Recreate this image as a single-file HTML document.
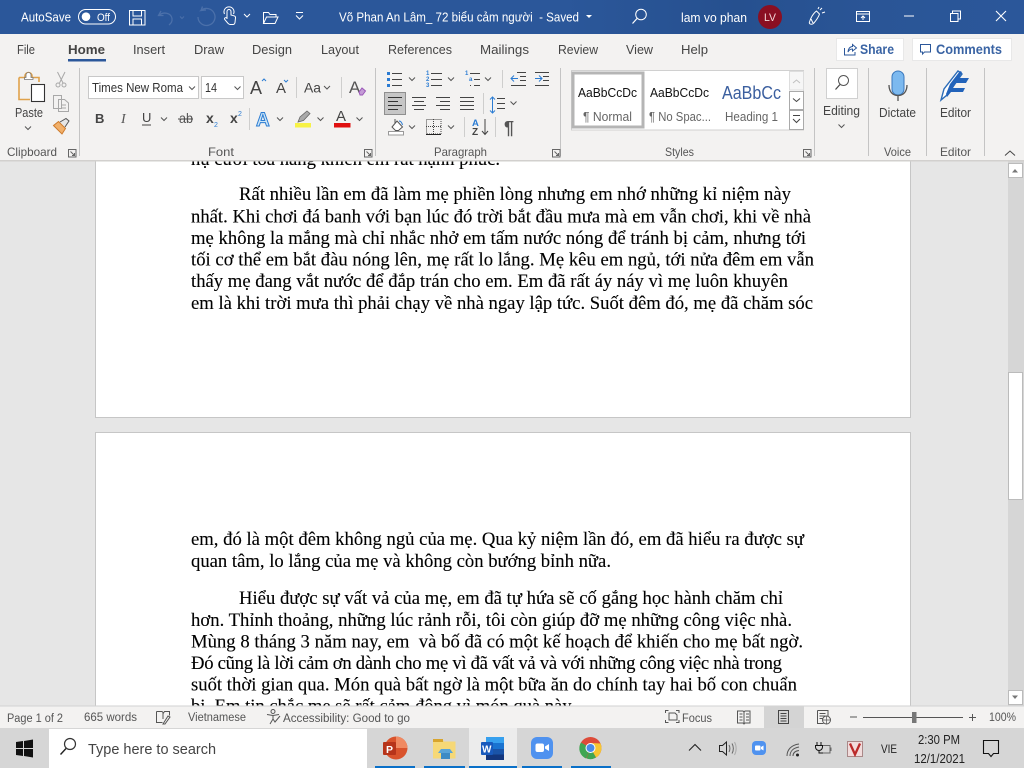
<!DOCTYPE html>
<html lang="vi"><head><meta charset="utf-8"><title>Word</title>
<style>
html,body{margin:0;padding:0;width:1024px;height:768px;overflow:hidden;background:#e6e6e6}
svg{display:block;position:absolute;left:0;top:0}
text{font-family:"Liberation Sans","DejaVu Sans",sans-serif;white-space:pre}
.d{font-family:"Liberation Serif","Noto Serif CJK SC",serif;font-size:18.67px;fill:#000;stroke:#000;stroke-width:.12}
.u{font-size:12.5px;fill:#444}
.n{font-size:13px;fill:#444}
.l{font-size:12px;fill:#555}
.s{font-size:11.5px;fill:#555}
.tb{font-size:13px;fill:#fff}
.k{fill:none;stroke:#444;stroke-width:1}
.sep{stroke:#c4c4c4;stroke-width:1}
</style></head><body>
<svg width="1024" height="768" viewBox="0 0 1024 768" xmlns="http://www.w3.org/2000/svg">
<defs>
<path id="c" d="M-3 -1.500L0 1.500L3 -1.500" fill="none" stroke="#555" stroke-width="1"/>
<path id="lau" d="M0 0H7.500V7.500H0Z M2 2L6 6 M6 3.500V6H3.500" fill="none" stroke="#666" stroke-width="1"/>
<linearGradient id="tg" x1="0" x2="1" y1="0" y2="0"><stop offset="0" stop-color="#2b579a"/><stop offset=".55" stop-color="#2b579a"/><stop offset=".72" stop-color="#26508f"/><stop offset=".85" stop-color="#2a5596"/><stop offset="1" stop-color="#2b579a"/></linearGradient>
</defs>

<!-- document background -->
<rect width="1024" height="768" fill="#e6e6e6"/>
<rect x="95.500" y="150" width="815" height="267.500" fill="#fff" stroke="#c6c6c6"/>
<rect x="95.500" y="432.500" width="815" height="290" fill="#fff" stroke="#c6c6c6"/>

<!-- document text -->
<text class="d" x="191" y="165" textLength="309">nụ cười tỏa nắng khiến em rất hạnh phúc.</text>
<text class="d" x="239" y="200" textLength="552">Rất nhiều lần em đã làm mẹ phiền lòng nhưng em nhớ những kỉ niệm này</text>
<text class="d" x="191" y="222.500" textLength="620">nhất. Khi chơi đá banh với bạn lúc đó trời bắt đầu mưa mà em vẫn chơi, khi về nhà</text>
<text class="d" x="191" y="244" textLength="615">mẹ không la mắng mà chỉ nhắc nhở em tấm nước nóng để tránh bị cảm, nhưng tới</text>
<text class="d" x="191" y="265.500" textLength="623">tối cơ thể em bắt đàu nóng lên, mẹ rất lo lắng. Mẹ kêu em ngủ, tới nửa đêm em vẫn</text>
<text class="d" x="191" y="287" textLength="597">thấy mẹ đang vắt nước để đắp trán cho em. Em đã rất áy náy vì mẹ luôn khuyên</text>
<text class="d" x="191" y="309" textLength="622">em là khi trời mưa thì phải chạy về nhà ngay lập tức. Suốt đêm đó, mẹ đã chăm sóc</text>
<text class="d" x="191" y="545" textLength="613">em, đó là một đêm không ngủ của mẹ. Qua kỷ niệm lần đó, em đã hiểu ra được sự</text>
<text class="d" x="191" y="567" textLength="420">quan tâm, lo lắng của mẹ và không còn bướng bỉnh nữa.</text>
<text class="d" x="239" y="604" textLength="544">Hiểu được sự vất vả của mẹ, em đã tự hứa sẽ cố gắng học hành chăm chỉ</text>
<text class="d" x="191" y="626" textLength="601">hơn. Thỉnh thoảng, những lúc rảnh rỗi, tôi còn giúp đỡ mẹ những công việc nhà.</text>
<text class="d" x="191" y="647.500" textLength="612">Mùng 8 tháng 3 năm nay, em  và bố đã có một kế hoạch để khiến cho mẹ bất ngờ.</text>
<text class="d" x="191" y="669" textLength="591">Đó cũng là lời cảm ơn dành cho mẹ vì đã vất vả và với những công việc nhà trong</text>
<text class="d" x="191" y="690.500" textLength="606">suốt thời gian qua. Món quà bất ngờ là một bữa ăn do chính tay hai bố con chuẩn</text>
<text class="d" x="191" y="712" textLength="384">bị. Em tin chắc mẹ sẽ rất cảm động vì món quà này.</text>

<!-- scrollbar -->
<rect x="1008" y="161" width="16" height="545" fill="#d6d6d6"/>
<rect x="1008.500" y="163.500" width="14" height="14" fill="#fff" stroke="#bbb"/>
<path d="M1012 172.500h6l-3-3.500z" fill="#777"/>
<rect x="1008.500" y="372.500" width="14" height="127" fill="#fff" stroke="#bbb"/>
<rect x="1008.500" y="690.500" width="14" height="14" fill="#fff" stroke="#bbb"/>
<path d="M1012 695.500h6l-3 3.500z" fill="#777"/>

<!-- title bar -->
<rect width="1024" height="34" fill="url(#tg)"/>
<text class="tb" x="21" y="21.500" textLength="50" lengthAdjust="spacingAndGlyphs">AutoSave</text>
<rect x="78.500" y="9.500" width="37" height="14.500" rx="7.200" fill="none" stroke="#fff"/>
<circle cx="86" cy="16.700" r="4.300" fill="#fff"/>
<text x="97" y="21" textLength="13" lengthAdjust="spacingAndGlyphs" style="font-size:11px;fill:#fff">Off</text>
<path d="M129.500 10.500h15.500v14.500h-15.500z M133 10.500v5.500h8.500v-5.500 M133 25v-6h8.500v6" fill="none" stroke="#fff"/>
<path d="M161 11l-2.500 4.500h5 M159 15.500c4-4 12-3 13 3 .4 3-1 5-3 6.500" fill="none" stroke="#4b70aa" stroke-width="1.300"/>
<path d="M180 16.500l2 2 2-2" fill="none" stroke="#4b70aa"/>
<path d="M198 17a8.500 8.500 0 1 0 3-6.500l5-.5 M202.500 6.500l-1.500 4" fill="none" stroke="#4b70aa" stroke-width="1.300"/>
<path d="M227 19v-7.500a2 2 0 0 1 4 0V15l3 .8c1 .3 1.700 1 1.500 2.200l-.5 4.500c-.2 1-.8 2-2 2h-3c-1 0-1.600-.8-2.300-1.500l-3-3.500c-.9-1.300 1-2.500 2.300-1.500zM224.500 14a5 5 0 1 1 9 0" fill="none" stroke="#fff" stroke-width="1"/>
<path d="M244 14l3 3 3-3" fill="none" stroke="#fff"/>
<path d="M263.500 23.500v-11h5l1.500 2h6v2.500 M263.500 23.500l3-6.500h11.500l-3 6.500z" fill="none" stroke="#fff"/>
<path d="M296 12.500h7 M296 15.500l3.500 3.500 3.500-3.500" fill="none" stroke="#fff"/>
<text class="tb" x="339" y="21.500" textLength="240" lengthAdjust="spacingAndGlyphs">Võ Phan An Lâm_ 72 biểu cảm người  - Saved</text>
<path d="M586 15h6l-3 3z" fill="#fff"/>
<circle cx="641" cy="14.500" r="5.300" fill="none" stroke="#fff"/><path d="M637 18.500l-4.500 5" stroke="#fff" stroke-width="1.200"/>
<text class="tb" x="681" y="22" textLength="66" lengthAdjust="spacingAndGlyphs">lam vo phan</text>
<circle cx="770" cy="17" r="12" fill="#8a0f22"/>
<text x="764" y="21" textLength="12" lengthAdjust="spacingAndGlyphs" style="font-size:11px;fill:#f4d8d8">LV</text>
<path d="M809.500 22c1-4 4-9 7-11l3 3c-1 3.500-3 6-6 9.500-2 1.500-5 .5-4-1.500zM813 23l-2-4M820 10l2-2M822 13l3-1M818 9l1-2" fill="none" stroke="#fff"/>
<path d="M856.500 11.500h13v10h-13zM856.500 14h13M863 20v-4M861 18l2-2 2 2" fill="none" stroke="#fff"/>
<path d="M904 16h10" stroke="#fff"/>
<path d="M950.500 13.500h7.500v8h-7.500zM952.500 13v-2h8v8h-2.500" fill="none" stroke="#fff"/>
<path d="M996 11l10 10M1006 11l-10 10" stroke="#fff" stroke-width="1.100"/>

<!-- ribbon -->
<rect y="34" width="1024" height="126" fill="#f3f2f1"/>
<rect y="160" width="1024" height="1.500" fill="#d2d0ce"/>
<text class="n" x="17" y="54" textLength="18" lengthAdjust="spacingAndGlyphs">File</text>
<text class="n" x="68" y="54" textLength="37" lengthAdjust="spacingAndGlyphs" style="font-weight:bold">Home</text>
<text class="n" x="133" y="54" textLength="32" lengthAdjust="spacingAndGlyphs">Insert</text>
<text class="n" x="194" y="54" textLength="30" lengthAdjust="spacingAndGlyphs">Draw</text>
<text class="n" x="252" y="54" textLength="40" lengthAdjust="spacingAndGlyphs">Design</text>
<text class="n" x="321" y="54" textLength="38" lengthAdjust="spacingAndGlyphs">Layout</text>
<text class="n" x="388" y="54" textLength="64" lengthAdjust="spacingAndGlyphs">References</text>
<text class="n" x="480" y="54" textLength="49" lengthAdjust="spacingAndGlyphs">Mailings</text>
<text class="n" x="558" y="54" textLength="40" lengthAdjust="spacingAndGlyphs">Review</text>
<text class="n" x="626" y="54" textLength="27" lengthAdjust="spacingAndGlyphs">View</text>
<text class="n" x="681" y="54" textLength="27" lengthAdjust="spacingAndGlyphs">Help</text>
<rect x="68" y="59" width="38" height="2.500" fill="#2b579a"/>
<rect x="836.500" y="38.500" width="67" height="22" fill="#fff" stroke="#e8e8e8"/>
<path d="M844.500 48v7h10.500v-3M848 52c0-3 2-5.500 4.500-5.500v-2l4 3.500-4 3v-2c-2 0-3.500 1-4.500 3z" fill="none" stroke="#2b579a"/>
<text x="860" y="54" textLength="34" lengthAdjust="spacingAndGlyphs" style="font-size:13.500px;font-weight:bold;fill:#3a64a4">Share</text>
<rect x="912.500" y="38.500" width="99" height="22" fill="#fff" stroke="#e8e8e8"/>
<path d="M920.500 44.500h10v7.500h-6l-2 2v-2h-2z" fill="none" stroke="#2b579a"/>
<text x="936" y="54" textLength="66" lengthAdjust="spacingAndGlyphs" style="font-size:13.500px;font-weight:bold;fill:#3a64a4">Comments</text>

<!-- group separators -->
<path class="sep" d="M79.500 68v88M375.500 68v88M560.500 68v88M814.500 68v88M868.500 68v88M926.500 68v88M984.500 68v88"/>
<path class="sep" stroke-opacity=".8" d="M296.500 77v21M341.500 77v21M249.500 108v22M502.500 70v18M483.500 93v21M464.500 117v20M495.500 117v20"/>

<!-- clipboard -->
<path d="M19 77.500h6v-1.500a3.500 3.500 0 0 1 7 0v1.500h7v4.500M19 77.500V99.500h11" fill="none" stroke="#e0a24b" stroke-width="1.600"/>
<path d="M24.500 79.500h8.500v-2h-2v-2.500a2.500 2.500 0 0 0-5 0v2.500h-1.500z" fill="#fff" stroke="#777" stroke-width=".8"/>
<rect x="31.500" y="84.500" width="13" height="17" fill="#fff" stroke="#333" stroke-width="1.100"/>
<text class="n" x="15" y="117" textLength="28" lengthAdjust="spacingAndGlyphs">Paste</text>
<use href="#c" x="28" y="128"/>
<path d="M57.500 72l5.500 11M65 72l-5.500 11" stroke="#a8a8a8" fill="none"/><circle cx="58" cy="85" r="2" fill="none" stroke="#a8a8a8"/><circle cx="64" cy="85" r="2" fill="none" stroke="#a8a8a8"/>
<path d="M53.500 95.500h8v13h-8zM58.500 99.500h6l4 3.500v8.500h-10zM61 105h5M61 108h5" fill="#f3f2f1" stroke="#a8a8a8"/>
<path d="M53.500 125.500l5-4 7 7-3.500 5.500z" fill="#f1b06a" stroke="#cd7a2b"/><path d="M60 122l6-3.500 3 2.500-4 6" fill="#e6e6e6" stroke="#555"/>
<text class="l" x="7" y="156" textLength="50" lengthAdjust="spacingAndGlyphs">Clipboard</text>
<use href="#lau" x="68.500" y="149.500"/>

<!-- font group -->
<rect x="88.500" y="76.500" width="110" height="22" fill="#fff" stroke="#c8c8c8"/>
<text x="92" y="92" textLength="91" lengthAdjust="spacingAndGlyphs" style="font-size:13px;fill:#333">Times New Roma</text>
<use href="#c" x="192" y="88"/>
<rect x="201.500" y="76.500" width="42" height="22" fill="#fff" stroke="#c8c8c8"/>
<text x="205" y="92" textLength="12" lengthAdjust="spacingAndGlyphs" style="font-size:13px;fill:#333">14</text>
<use href="#c" x="237.500" y="88"/>
<text x="250" y="94" style="font-size:18px;fill:#444">A</text>
<path d="M262 81l2-2 2 2" stroke="#2b7cd3" fill="none"/>
<text x="276" y="93" style="font-size:15px;fill:#444">A</text>
<path d="M284 80l2 2 2-2" stroke="#2b7cd3" fill="none"/>
<text x="304" y="92.500" textLength="17" lengthAdjust="spacingAndGlyphs" style="font-size:14px;fill:#444">Aa</text>
<use href="#c" x="327" y="87.500"/>
<text x="349" y="93" style="font-size:17px;fill:#555">A</text>
<path d="M359 92l3-4 3.500 3-3 4h-2.500z" fill="#c49bd6" stroke="#9a57b8"/>
<text x="95" y="123" style="font-size:13px;font-weight:bold;fill:#444">B</text>
<text x="121" y="123" style="font-size:14px;font-style:italic;fill:#555;font-family:'Liberation Serif',serif">I</text>
<text x="142" y="122" style="font-size:13px;fill:#444">U</text><path d="M142 125h9" stroke="#444"/>
<use href="#c" x="164" y="119"/>
<text x="179" y="123" textLength="14" lengthAdjust="spacingAndGlyphs" style="font-size:14px;fill:#555">ab</text><path d="M178 119h15" stroke="#444"/>
<text x="206" y="123" style="font-size:14px;font-weight:bold;fill:#444">x</text><text x="214" y="127" style="font-size:7px;fill:#2b7cd3">2</text>
<text x="230" y="123" style="font-size:14px;font-weight:bold;fill:#444">x</text><text x="238" y="116" style="font-size:7px;fill:#2b7cd3">2</text>
<text x="256" y="126" style="font-size:19px;font-weight:bold;fill:#cde6f7;stroke:#2b7cd3;stroke-width:1">A</text>
<use href="#c" x="280" y="119"/>
<path d="M298 122l2-5 7-6 3 2.500-6.500 7z" fill="#aaa" stroke="#666" stroke-width=".8"/>
<rect x="295" y="123" width="16" height="4.500" fill="#f7f246"/>
<use href="#c" x="320.500" y="119"/>
<text x="336" y="121" style="font-size:15px;fill:#444">A</text>
<rect x="334" y="123" width="16.500" height="4.500" fill="#e01010"/>
<use href="#c" x="359.500" y="119"/>
<text class="l" x="208" y="156" textLength="26" lengthAdjust="spacingAndGlyphs">Font</text>
<use href="#lau" x="364.500" y="149.500"/>

<!-- paragraph: row 1 -->
<g fill="#2b7cd3">
<rect x="387" y="72" width="3" height="3"/><rect x="387" y="78" width="3" height="3"/><rect x="387" y="84" width="3" height="3"/>
</g>
<path class="k" d="M392 73.500h10M392 79.500h10M392 85.500h10"/>
<use href="#c" x="412" y="79"/>
<text x="426" y="75" style="font-size:6px;fill:#2b7cd3;font-weight:bold">1</text><text x="426" y="81" style="font-size:6px;fill:#2b7cd3;font-weight:bold">2</text><text x="426" y="87" style="font-size:6px;fill:#2b7cd3;font-weight:bold">3</text>
<path class="k" d="M431 73.500h11M431 79.500h11M431 85.500h11"/>
<use href="#c" x="451" y="79"/>
<text x="465" y="75" style="font-size:6px;fill:#2b7cd3;font-weight:bold">1</text><text x="469" y="81" style="font-size:6px;fill:#2b7cd3;font-weight:bold">a</text>
<path class="k" d="M470 73.500h10M474 79.500h6M474 85.500h6M470 85.500h1"/>
<use href="#c" x="488" y="79"/>
<path class="k" d="M517 72.500h9M520 76.500h6M520 80.500h6M511 85.500h15"/><path d="M511 78.500h7M514 75.500l-3 3 3 3" fill="none" stroke="#2b7cd3"/>
<path class="k" d="M535 72.500h14M543 76.500h6M543 80.500h6M535 85.500h14"/><path d="M535 78.500h7M539 75.500l3 3-3 3" fill="none" stroke="#2b7cd3"/>

<!-- paragraph: row 2 -->
<rect x="384.500" y="92.500" width="21" height="22" fill="#c6c6c6" stroke="#8f8f8f"/>
<path d="M388 97.500h14M388 101.500h10M388 105.500h14M388 109.500h10" stroke="#333" fill="none"/>
<path class="k" d="M412 97.500h14M414 101.500h10M412 105.500h14M414 109.500h10"/>
<path class="k" d="M436 97.500h14M440 101.500h10M436 105.500h14M440 109.500h10"/>
<path class="k" d="M460 97.500h14M460 101.500h14M460 105.500h14M460 109.500h14"/>
<path d="M492.500 97v16M490 99.500l2.500-2.500 2.500 2.500M490 110.500l2.500 2.500 2.500-2.500" fill="none" stroke="#2b7cd3"/>
<path class="k" d="M497 98.500h8M497 103.500h8M497 108.500h8"/>
<use href="#c" x="513.500" y="103"/>

<!-- paragraph: row 3 -->
<path d="M392 127l5-6 5.500 6-4 3.500h-3z" fill="#fff" stroke="#555"/><path d="M395 119v4" stroke="#555"/><path d="M399 121c2 0 3 2 3.500 4" stroke="#2b7cd3" fill="none"/>
<rect x="388.500" y="131.500" width="15" height="3.500" fill="#fff" stroke="#999"/>
<use href="#c" x="412" y="127"/>
<path d="M426.500 119.500h14.500v14.500h-14.500z" fill="none" stroke="#444" stroke-dasharray="1 1"/><path d="M426 126.500h15M433.500 119v15" stroke="#444" stroke-dasharray="1 1"/><path d="M426 134.500h15" stroke="#222"/>
<use href="#c" x="451" y="127"/>
<text x="472" y="126" style="font-size:9.500px;font-weight:bold;fill:#2b7cd3">A</text>
<text x="472" y="135" style="font-size:10px;font-weight:bold;fill:#444">Z</text>
<path d="M485 119v15M482 131l3 3.500 3-3.500" fill="none" stroke="#444"/>
<text x="504" y="134" style="font-size:18px;font-weight:bold;fill:#555">¶</text>
<text class="l" x="434" y="156" textLength="53" lengthAdjust="spacingAndGlyphs">Paragraph</text>
<use href="#lau" x="552.500" y="149.500"/>

<!-- styles -->
<rect x="571.500" y="70.500" width="232" height="59.500" fill="#fff" stroke="#d0d0d0"/>
<rect x="573" y="73" width="70" height="54" fill="#fff" stroke="#b5b5b5" stroke-width="3"/>
<text x="578" y="97" textLength="59" lengthAdjust="spacingAndGlyphs" style="font-size:13px;fill:#111">AaBbCcDc</text>
<text x="583" y="121" textLength="49" lengthAdjust="spacingAndGlyphs" style="font-size:12.500px;fill:#666">¶ Normal</text>
<text x="650" y="97" textLength="59" lengthAdjust="spacingAndGlyphs" style="font-size:13px;fill:#111">AaBbCcDc</text>
<text x="649" y="121" textLength="62" lengthAdjust="spacingAndGlyphs" style="font-size:12.500px;fill:#666">¶ No Spac...</text>
<text x="722" y="99" textLength="59" lengthAdjust="spacingAndGlyphs" style="font-size:18px;fill:#3b5f9f">AaBbCc</text>
<text x="725" y="121" textLength="53" lengthAdjust="spacingAndGlyphs" style="font-size:12.500px;fill:#666">Heading 1</text>
<rect x="789.500" y="71.500" width="14" height="18.500" fill="#f6f6f6" stroke="#ddd"/>
<path d="M793 83l3.500-3 3.500 3" stroke="#c0c0c0" fill="none"/>
<rect x="789.500" y="91.500" width="14" height="18" fill="#fff" stroke="#aaa"/>
<path d="M793 98.500l3.500 3 3.500-3" stroke="#444" fill="none"/>
<rect x="789.500" y="110.500" width="14" height="19" fill="#fff" stroke="#aaa"/>
<path d="M793 115.500h7M793 119l3.500 3.500 3.500-3.500" stroke="#444" fill="none"/>
<text class="l" x="665" y="156" textLength="29" lengthAdjust="spacingAndGlyphs">Styles</text>
<use href="#lau" x="803.500" y="149.500"/>

<!-- editing -->
<rect x="826.500" y="68.500" width="31" height="30" fill="#fff" stroke="#d0d0d0"/>
<circle cx="843.500" cy="80.500" r="5" fill="none" stroke="#555"/><path d="M840 84.500l-4.500 5" stroke="#444" stroke-width="1.200"/>
<text class="n" x="823" y="115" textLength="37" lengthAdjust="spacingAndGlyphs">Editing</text>
<use href="#c" x="841.500" y="126"/>
<!-- dictate -->
<rect x="892" y="71" width="12" height="24" rx="6" fill="#7cb9ef" stroke="#3a78bd"/>
<path d="M889 85c0 6.500 3.500 10.500 9 10.500s9-4 9-10.500M898 96v5" fill="none" stroke="#555" stroke-width="1.300"/>
<text class="n" x="879" y="117" textLength="37" lengthAdjust="spacingAndGlyphs">Dictate</text>
<text class="l" x="884" y="156" textLength="27" lengthAdjust="spacingAndGlyphs">Voice</text>
<!-- editor -->
<path d="M941 100l3-11 14-18 4 3-15 21z" fill="#fff" stroke="#2b6cb8" stroke-width="1.400"/>
<path d="M947 97l4-5h12l2-4h-12l3-5h10l3-5h-10l3-6-2-1-10 13-4 10z" fill="#2263ba"/>
<text class="n" x="940" y="117" textLength="31" lengthAdjust="spacingAndGlyphs">Editor</text>
<text class="l" x="940" y="156" textLength="31" lengthAdjust="spacingAndGlyphs">Editor</text>
<path d="M1005 155.500l5-4.500 5 4.500" fill="none" stroke="#444"/>

<!-- status bar -->
<rect y="706" width="1024" height="22" fill="#f3f2f1"/>
<rect y="705.500" width="1024" height="1" fill="#d2d2d2"/>
<text class="s" x="7" y="722" textLength="56" lengthAdjust="spacingAndGlyphs">Page 1 of 2</text>
<text class="s" x="84" y="721" textLength="53" lengthAdjust="spacingAndGlyphs">665 words</text>
<path d="M156.500 711.500h5.500l1.500 1.500 1-1.500h5v4M156.500 711.500v11h6M163 713v6M163 724l5-8 2 1-5 7z" fill="none" stroke="#555"/>
<text class="s" x="188" y="721" textLength="58" lengthAdjust="spacingAndGlyphs">Vietnamese</text>
<circle cx="273" cy="711.500" r="2" fill="none" stroke="#555"/><path d="M267 714.500l6 1 6-1M273 716v3l-3 5M273 719l2 3 5-6" fill="none" stroke="#555"/>
<text class="s" x="283" y="722" textLength="127" lengthAdjust="spacingAndGlyphs">Accessibility: Good to go</text>
<path d="M665.500 713v-2.500h3M676 710.500h3v2.500M665.500 720v2.500h3M676 722.500h3V720M669 713h6l2 2v5h-8z" fill="none" stroke="#555"/>
<text class="s" x="682" y="722" textLength="30" lengthAdjust="spacingAndGlyphs">Focus</text>
<path d="M737.500 711h5.500l1 1 1-1h5v12h-5l-1 1-1-1h-5.500zM744 712v11M739.500 714h3M739.500 717h3M739.500 720h3M746 714h3M746 717h3M746 720h3" fill="none" stroke="#555"/>
<rect x="764" y="706" width="40" height="22" fill="#d4d4d4"/>
<path d="M778.500 710.500h10v13h-10zM780.500 713.500h6M780.500 716h6M780.500 718.500h6M780.500 721h6" fill="none" stroke="#444"/>
<path d="M817.500 710.500h10.500v8M817.500 710.500v13h6M819.500 713.500h6M819.500 716h6M819.500 718.500h3" fill="none" stroke="#555"/>
<circle cx="826.500" cy="720" r="4" fill="#f3f2f1" stroke="#555"/><path d="M822.500 720h8M826.500 716v8" stroke="#555" stroke-width=".7"/>
<path d="M850 717h7M863 717.500h100M969 717.500h7M972.500 714v7" stroke="#555"/>
<rect x="912" y="712" width="4.500" height="11" fill="#777"/>
<text class="s" x="989" y="721" textLength="27" lengthAdjust="spacingAndGlyphs">100%</text>

<!-- taskbar -->
<rect y="728" width="1024" height="40" fill="#d6d6d6"/>
<path d="M16 742l7-1v7h-7zM24 741l9-1.500v8.500h-9zM16 749h7v7l-7-1zM24 749h9v8.500l-9-1.500z" fill="#111"/>
<rect x="49" y="729" width="318" height="39" fill="#fff"/>
<circle cx="70" cy="744" r="5.500" fill="none" stroke="#333" stroke-width="1.200"/><path d="M66 748.500l-5.500 6" stroke="#222" stroke-width="1.400"/>
<text x="88" y="754" textLength="128" lengthAdjust="spacingAndGlyphs" style="font-size:15px;fill:#444">Type here to search</text>
<rect x="469" y="728" width="48" height="40" fill="#ececec"/>
<g fill="#0a70c8">
<rect x="375" y="766" width="40" height="2"/><rect x="424" y="766" width="41" height="2"/><rect x="469" y="766" width="48" height="2"/><rect x="522" y="766" width="40" height="2"/><rect x="571" y="766" width="40" height="2"/>
</g>
<!-- powerpoint -->
<circle cx="396" cy="748" r="11.500" fill="#d9532c"/>
<path d="M396 748v-11.500a11.500 11.500 0 0 1 11.500 11.500z" fill="#f08a62"/>
<rect x="383" y="742" width="13" height="13" rx="1" fill="#b7341a"/>
<text x="386" y="753" style="font-size:10.500px;font-weight:bold;fill:#fff">P</text>
<!-- folder -->
<path d="M433 739h9l2 2.500h11.500v17h-22.500z" fill="#f6d877"/><rect x="433" y="739" width="10" height="3" fill="#d8a52e"/>
<rect x="441" y="753" width="9" height="6" fill="#3e8bc5"/><path d="M438 753l3-4h9l3 4z" fill="#5aa4d8"/>
<!-- word -->
<rect x="486" y="737" width="18" height="23" rx="1" fill="#1f5fb5"/>
<rect x="486" y="737" width="18" height="6" fill="#37a0ee"/><rect x="486" y="743" width="18" height="6" fill="#1a73d0"/><rect x="486" y="749" width="18" height="5.500" fill="#1a54a8"/><rect x="486" y="754.500" width="18" height="5.500" fill="#13377e"/>
<rect x="481" y="742" width="12" height="13" rx="1" fill="#185abd"/>
<text x="482" y="752.500" style="font-size:10px;font-weight:bold;fill:#fff">W</text>
<!-- zoom -->
<rect x="531" y="737" width="22" height="22" rx="6" fill="#4f92ef"/>
<rect x="535.500" y="743.500" width="8.500" height="8.500" rx="2" fill="#fff"/><path d="M545 746.500l4-2.500v7l-4-2.500z" fill="#fff"/>
<!-- chrome -->
<circle cx="590.500" cy="748" r="11" fill="#dd4b39"/>
<path d="M590.500 748l-9.500 -5.500a11 11 0 0 0 5 16z" fill="#3fa653"/>
<path d="M590.500 748l5.500 9.500a11 11 0 0 0 4.500-14l-10-.5z" fill="#f6c632"/>
<path d="M590.500 748l-4 10.500a11 11 0 0 0 9.500 -1z" fill="#3fa653"/>
<circle cx="590.500" cy="748" r="5" fill="#fff"/><circle cx="590.500" cy="748" r="4" fill="#4a8be8"/>

<!-- tray -->
<path d="M689 750.500l6-6 6 6" fill="none" stroke="#222" stroke-width="1.100"/>
<path d="M719.500 745.500h3l4-3.500v13l-4-3.500h-3z" fill="none" stroke="#222"/><path d="M729 745c1.200 2 1.200 5 0 7M732 743.500c1.800 3 1.800 7 0 10" fill="none" stroke="#666"/><path d="M734.500 742c2.200 4 2.200 9 0 13" fill="none" stroke="#aaa"/>
<rect x="752" y="741" width="14" height="14" rx="4" fill="#4f92ef"/><rect x="755" y="745.500" width="5.500" height="5" rx="1" fill="#fff"/><path d="M761 747l2.500-1.500v5l-2.500-1.500z" fill="#fff"/>
<path d="M787 756c0-6 4-11 12-12M790 756c0-4.500 3-8 9-9M793 756c0-3 2-5 6-5.500" fill="none" stroke="#555"/><circle cx="797.500" cy="755" r="1.500" fill="#222"/>
<path d="M817 742v3M821 742v3M815.500 745.500h7v1.500a3.500 3.500 0 0 1-7 0zM819 750v3h4" fill="none" stroke="#111"/><path d="M823 745.500h7v7.500h-7" fill="none" stroke="#666"/><path d="M831 747.500v3.500" stroke="#666"/>
<rect x="847.500" y="741.500" width="15" height="15" fill="#f2dcdc" stroke="#a88"/>
<path d="M850 743.500l5 11 5-11" fill="none" stroke="#bb2a2a" stroke-width="2.300"/>
<text x="881" y="753" textLength="16" lengthAdjust="spacingAndGlyphs" style="font-size:12px;fill:#222">VIE</text>
<text x="918" y="744" textLength="42" lengthAdjust="spacingAndGlyphs" style="font-size:13px;fill:#222">2:30 PM</text>
<text x="914" y="763" textLength="51" lengthAdjust="spacingAndGlyphs" style="font-size:13px;fill:#222">12/1/2021</text>
<path d="M983.500 740.500h15v13h-5l-2.500 3-2.500-3h-5z" fill="none" stroke="#111" stroke-width="1.100"/>
</svg>
</body></html>
